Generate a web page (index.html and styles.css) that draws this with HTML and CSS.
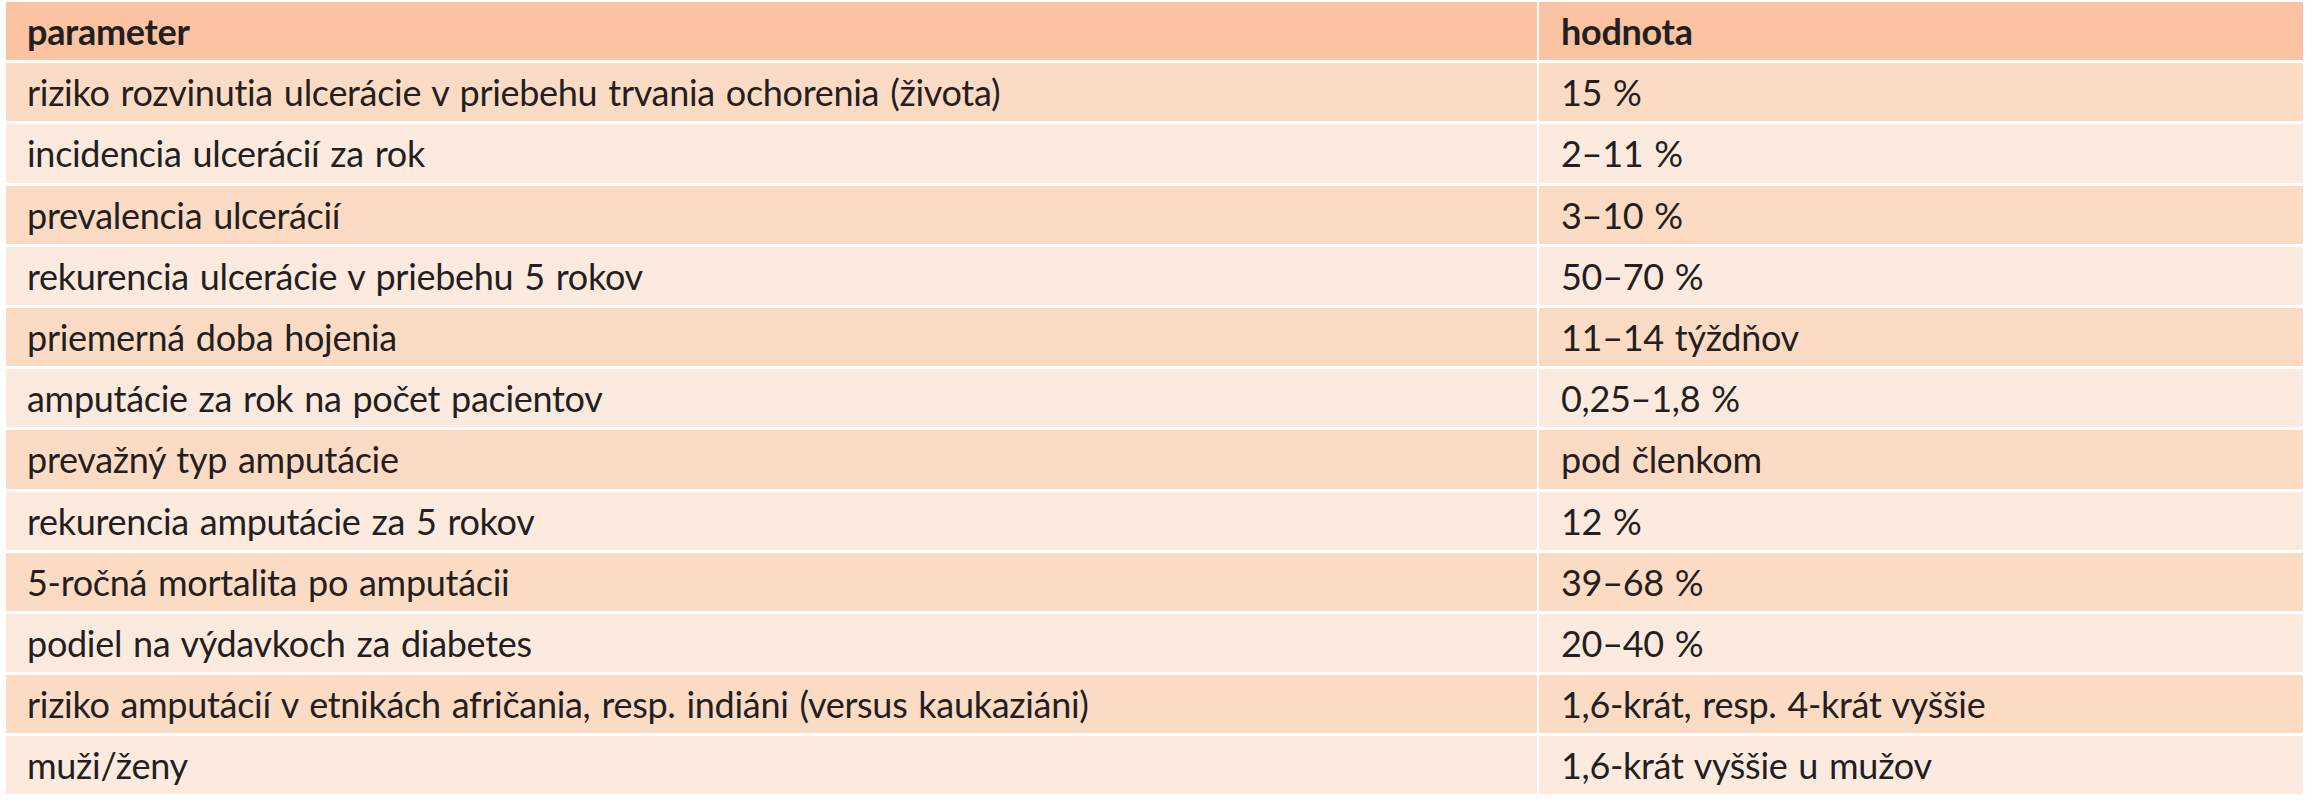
FILE: index.html
```html
<!DOCTYPE html>
<html lang="sk">
<head>
<meta charset="utf-8">
<title>Tabuľka</title>
<link rel="stylesheet" href="styles.css">
</head>
<body>
<div class="table">
  <div class="row head"><div class="cell">parameter</div><div class="cell">hodnota</div></div>
  <div class="row odd"><div class="cell">riziko rozvinutia ulcerácie v priebehu trvania ochorenia (života)</div><div class="cell">15 %</div></div>
  <div class="row even"><div class="cell">incidencia ulcerácií za rok</div><div class="cell">2–11 %</div></div>
  <div class="row odd"><div class="cell">prevalencia ulcerácií</div><div class="cell">3–10 %</div></div>
  <div class="row even"><div class="cell">rekurencia ulcerácie v priebehu 5 rokov</div><div class="cell">50–70 %</div></div>
  <div class="row odd"><div class="cell">priemerná doba hojenia</div><div class="cell">11–14 týždňov</div></div>
  <div class="row even"><div class="cell">amputácie za rok na počet pacientov</div><div class="cell">0,25–1,8 %</div></div>
  <div class="row odd"><div class="cell">prevažný typ amputácie</div><div class="cell">pod členkom</div></div>
  <div class="row even"><div class="cell">rekurencia amputácie za 5 rokov</div><div class="cell">12 %</div></div>
  <div class="row odd"><div class="cell">5-ročná mortalita po amputácii</div><div class="cell">39–68 %</div></div>
  <div class="row even"><div class="cell">podiel na výdavkoch za diabetes</div><div class="cell">20–40 %</div></div>
  <div class="row odd"><div class="cell">riziko amputácií v etnikách afričania, resp. indiáni (versus kaukaziáni)</div><div class="cell">1,6-krát, resp. 4-krát vyššie</div></div>
  <div class="row even"><div class="cell">muži/ženy</div><div class="cell">1,6-krát vyššie u mužov</div></div>
</div>
</body>
</html>
```
FILE: styles.css
```css
html, body {
  margin: 0;
  padding: 0;
  background: #ffffff;
}
body {
  padding: 2px 9px 0 6px;
  font-family: "Lato", "Liberation Sans", sans-serif;
  color: #231f20;
}
.table {
  display: flex;
  flex-direction: column;
  gap: 3px;
}
.row {
  display: grid;
  grid-template-columns: 1531px 1fr;
  column-gap: 2px;
  height: 58.2px;
}
.cell {
  display: flex;
  align-items: center;
  font-size: 36px;
  letter-spacing: -0.3px;
  word-spacing: 2px;
  white-space: nowrap;
}
.row .cell:first-child { padding-left: 21px; }
.row .cell:last-child { padding-left: 22px; }
.head .cell {
  background: #fbc3a1;
  font-weight: 700;
}
.odd .cell { background: #fcdbc5; }
.even .cell { background: #fdeadf; }
```
